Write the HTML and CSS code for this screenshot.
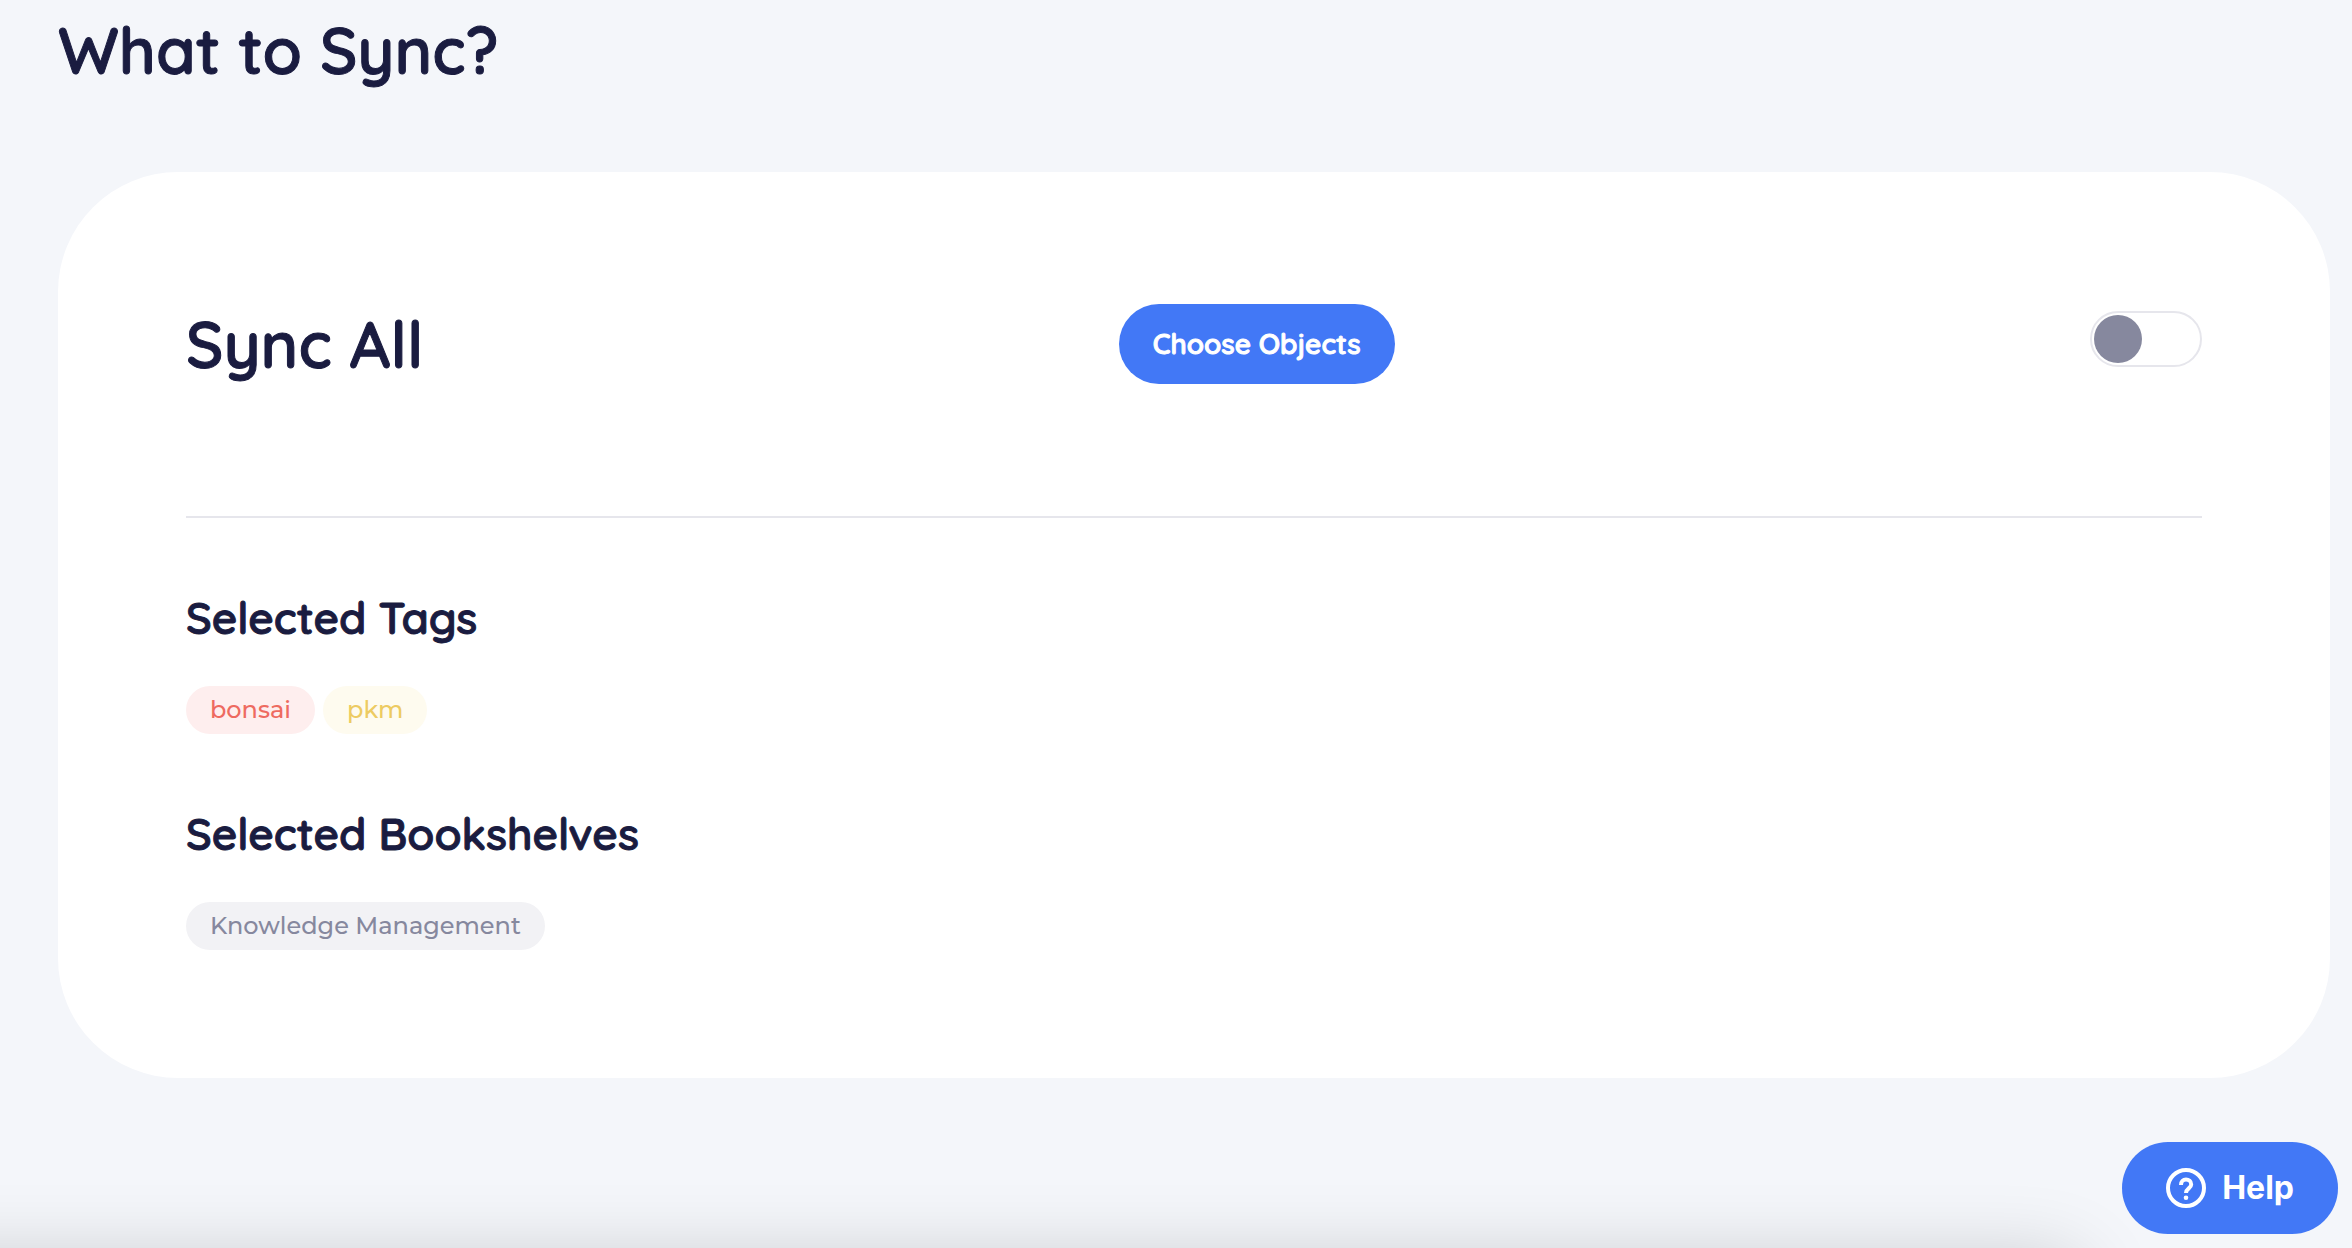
FILE: index.html
```html
<!DOCTYPE html>
<html lang="en">
<head>
<meta charset="utf-8">
<title>Sync settings</title>
<meta name="viewport" content="width=device-width, initial-scale=1">
<link rel="stylesheet" href="styles.css">
</head>
<body>
<main class="page">
  <h1 class="title">What to Sync?</h1>
  <section class="card">
    <div class="card-head">
      <h2 class="title" id="sync-all">Sync All</h2>
      <button class="choose" type="button">Choose Objects</button>
      <input class="switch" type="checkbox" role="switch" aria-labelledby="sync-all">
    </div>
    <div class="group">
      <h3 class="subtitle">Selected Tags</h3>
      <ul class="pills">
        <li class="pill pill-red">bonsai</li>
        <li class="pill pill-yellow">pkm</li>
      </ul>
    </div>
    <div class="group">
      <h3 class="subtitle">Selected Bookshelves</h3>
      <ul class="pills">
        <li class="pill pill-grey">Knowledge Management</li>
      </ul>
    </div>
  </section>
</main>
<div class="bottom-shade"></div>
<button class="help" type="button">
  <svg class="help-icon" viewBox="0 0 40 40" fill="none" stroke="#fff" aria-hidden="true">
    <circle cx="20" cy="20" r="18" stroke-width="4"/>
    <path d="M15 17C15 13.4 17.2 11.6 20 11.6S25.2 13.4 25.2 16.4C25.2 20.4 20 20.4 20 25" stroke-width="4" stroke-linejoin="round"/>
    <circle cx="20" cy="29.8" r="2.3" fill="#fff" stroke="none"/>
  </svg>
  Help
</button>
</body>
</html>
```
FILE: styles.css
```css
* {
  box-sizing: border-box;
}

body {
  margin: 0;
  min-height: 100vh;
  background: #f4f6fa;
  color: #1a1c40;
  font-family: Quicksand, Lato, "Open Sans", sans-serif;
}

h1, h2, h3, ul {
  margin: 0;
  padding: 0;
}

.page {
  display: flex;
  flex-direction: column;
  gap: 82px;
  padding: 10px 22px 80px 58px;
}

.title,
.subtitle,
.choose {
  font-weight: 600;
  -webkit-text-stroke: 1px currentColor;
}

.title {
  font-size: 64px;
  line-height: 80px;
}

.card {
  padding: 132px 128px 128px;
  border-radius: 120px;
  background: #fff;
}

.card-head {
  display: flex;
  align-items: center;
  justify-content: space-between;
  padding-bottom: 132px;
  border-bottom: 2px solid #e6e6ec;
}

.choose {
  height: 80px;
  padding: 0 34px;
  border: 0;
  border-radius: 40px;
  background: #4278f6;
  color: #fff;
  font-family: inherit;
  font-size: 28px;
  line-height: 40px;
}

.switch {
  appearance: none;
  display: flex;
  align-self: flex-start;
  width: 112px;
  height: 56px;
  margin: 7px 0 0;
  padding: 2px;
  border: 2px solid #e6e6ec;
  border-radius: 28px;
  background: #fff;
}

.switch::before {
  content: "";
  width: 48px;
  height: 48px;
  border-radius: 50%;
  background: #86889e;
}

.switch:checked {
  justify-content: flex-end;
}

.group {
  display: flex;
  flex-direction: column;
  gap: 40px;
  padding-top: 72px;
}

.subtitle {
  font-size: 44px;
  line-height: 56px;
}

.pills {
  display: flex;
  flex-wrap: wrap;
  gap: 8px;
  list-style: none;
}

.pill {
  padding: 0 24px;
  border-radius: 24px;
  font: 500 24px/48px Montserrat, Inter, sans-serif;
}

.pill-red {
  background: #feeeee;
  color: #ee6a60;
}

.pill-yellow {
  background: #fefbef;
  color: #edcb62;
}

.pill-grey {
  background: #f2f2f5;
  color: #86889e;
}

.bottom-shade {
  position: fixed;
  left: -200px;
  right: 272px;
  top: calc(100vh + 14px);
  height: 200px;
  border-radius: 20px;
  box-shadow: 0 0 80px rgba(0, 0, 0, 0.2);
  pointer-events: none;
}

.help {
  position: fixed;
  right: 14px;
  bottom: 14px;
  display: flex;
  align-items: center;
  gap: 16px;
  height: 92px;
  padding: 0 44px;
  border: 0;
  border-radius: 46px;
  background: #4278f6;
  color: #fff;
  font: 700 32px/40px Inter, sans-serif;
}

.help-icon {
  width: 40px;
  height: 40px;
}
```
